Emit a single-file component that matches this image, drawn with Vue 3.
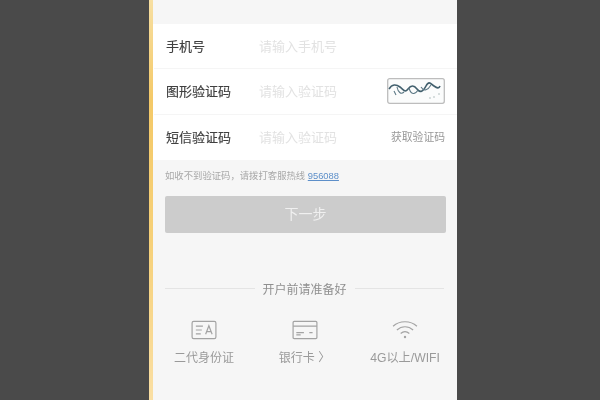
<script setup>
const rows = [
  { label: '手机号', hint: '请输入手机号', kind: '' },
  { label: '图形验证码', hint: '请输入验证码', kind: 'captcha' },
  { label: '短信验证码', hint: '请输入验证码', kind: 'sms' },
]
</script>

<template>
  <div class="page">
    <div class="stripe"></div>
    <main class="phone">
      <section class="form">
        <div v-for="r in rows" :key="r.label" class="row">
          <span class="label">{{ r.label }}</span>
          <span class="hint">{{ r.hint }}</span>
          <svg v-if="r.kind === 'captcha'" class="captcha" viewBox="0 0 58 26">
            <rect x="0.7" y="0.7" width="56.6" height="24.6" rx="2" fill="#fbfcfc" stroke="#bdbdbd" stroke-width="1.3" />
            <path d="M2 11 C5 6 9 6 13 9 S18 15 21 11 S27 7 30 11 S36 14 39 8 S44 6 47 8 S52 11 53 8" fill="none" stroke="#42606e" stroke-width="1.6" />
            <path d="M10 9 C11 14 14 17 17 14 M22 10 C24 17 28 17 31 12 M34 9 C37 14 41 12 44 7 M7 13 L9 17" fill="none" stroke="#5d7986" stroke-width="1.1" />
            <circle cx="43" cy="20" r="0.7" fill="#9aa" /><circle cx="47" cy="19" r="0.7" fill="#9aa" /><circle cx="52" cy="16" r="0.7" fill="#9aa" />
          </svg>
          <span v-else-if="r.kind === 'sms'" class="sms">获取验证码</span>
        </div>
      </section>

      <p class="note">如收不到验证码，请拨打客服热线 <a class="tel">956088</a></p>
      <button class="next">下一步</button>

      <div class="divider"><span>开户前请准备好</span></div>

      <div class="prep">
        <div class="item">
          <svg class="icon" viewBox="0 0 24 20">
            <rect x="1" y="2" width="22" height="16" rx="1.5" />
            <path d="M4.5 6.5H11M4.5 10H10M4.5 13.5H9" />
            <path d="M13.5 14 L16.5 6 L19.5 14 M14.5 11.5H18.5" />
          </svg>
          <span>二代身份证</span>
        </div>
        <div class="item">
          <svg class="icon" viewBox="0 0 24 20">
            <rect x="1" y="2" width="22" height="16" rx="1" />
            <path d="M1 6.5H23M4 12.5H11M4 14.5H8M16 12.5H19" />
          </svg>
          <span>银行卡 〉</span>
        </div>
        <div class="item">
          <svg class="icon" viewBox="0 0 24 20">
            <path d="M1 6.5 C7 1 17 1 23 6.5M4.5 10 C9 6 15 6 19.5 10M8 13.2 C10.5 11 13.5 11 16 13.2" />
            <circle cx="12" cy="16.5" r="1.1" fill="#a3a3a3" stroke="none" />
          </svg>
          <span class="wifi">4G以上/WIFI</span>
        </div>
      </div>
    </main>
  </div>
</template>

<style>
body { margin: 0; background: #4a4a4a; }
</style>

<style scoped>
.page {
  width: 600px;
  height: 400px;
  overflow: hidden;
  background: #4a4a4a;
  padding-left: 149px;
  box-sizing: border-box;
  display: flex;
  font-family: "Liberation Sans", "Noto Sans CJK SC", sans-serif;
}
.stripe {
  width: 4px;
  flex: none;
  background: linear-gradient(to bottom, #f7dfa2 0, #f4c968 25%, #f6d078 60%, #fadfa4 100%);
  filter: blur(0.4px);
}
.phone {
  width: 304px;
  height: 400px;
  flex: none;
  box-sizing: border-box;
  background: #f6f6f6;
  padding: 24px 0 0 1px;
  filter: blur(0.5px);
}
.form { background: #fff; margin-left: -1px; padding-left: 1px; }
.row {
  height: 45.3px;
  display: flex;
  align-items: center;
  padding: 0 12px 2px;
  box-sizing: border-box;
  border-bottom: 1px solid #f5f5f5;
}
.row:last-child { border-bottom: 0; }
.label {
  width: 93px;
  flex: none;
  font-size: 13px;
  color: #404040;
  -webkit-text-stroke: 0.15px #404040;
}
.hint {
  flex: 1;
  font-size: 13px;
  color: #e2e2e2;
}
.captcha { width: 58px; height: 26px; flex: none; position: relative; top: 1px; }
.sms { font-size: 10.8px; color: #989898; }
.note {
  margin: 0;
  padding: 10px 0 0 11px;
  height: 26px;
  font-size: 9.35px;
  line-height: 12px;
  color: #a8a8a8;
}
.tel { color: #5d8fc9; text-decoration: underline; }
.next {
  display: block;
  width: 281px;
  height: 37px;
  margin: 0 0 0 11px;
  padding: 0 0 2px;
  border: 0;
  border-radius: 2px;
  background: #cccccc;
  color: #f0f0f0;
  font-family: inherit;
  font-size: 14px;
}
.divider {
  display: flex;
  align-items: center;
  gap: 8px;
  margin: 47px 13px 0 11px;
  font-size: 12px;
  color: #8f8f8f;
}
.divider::before, .divider::after {
  content: "";
  flex: 1;
  height: 1px;
  background: #e4e4e4;
}
.prep {
  display: grid;
  grid-template-columns: 100px 101px 100px;
  margin-top: 22px;
}
.item {
  display: flex;
  flex-direction: column;
  align-items: center;
  gap: 7px;
  font-size: 12px;
  color: #9a9a9a;
  white-space: nowrap;
}
.wifi { font-size: 12.2px; }
.icon {
  width: 26px;
  height: 22px;
  fill: none;
  stroke: #a3a3a3;
  stroke-width: 1.1;
}
</style>
